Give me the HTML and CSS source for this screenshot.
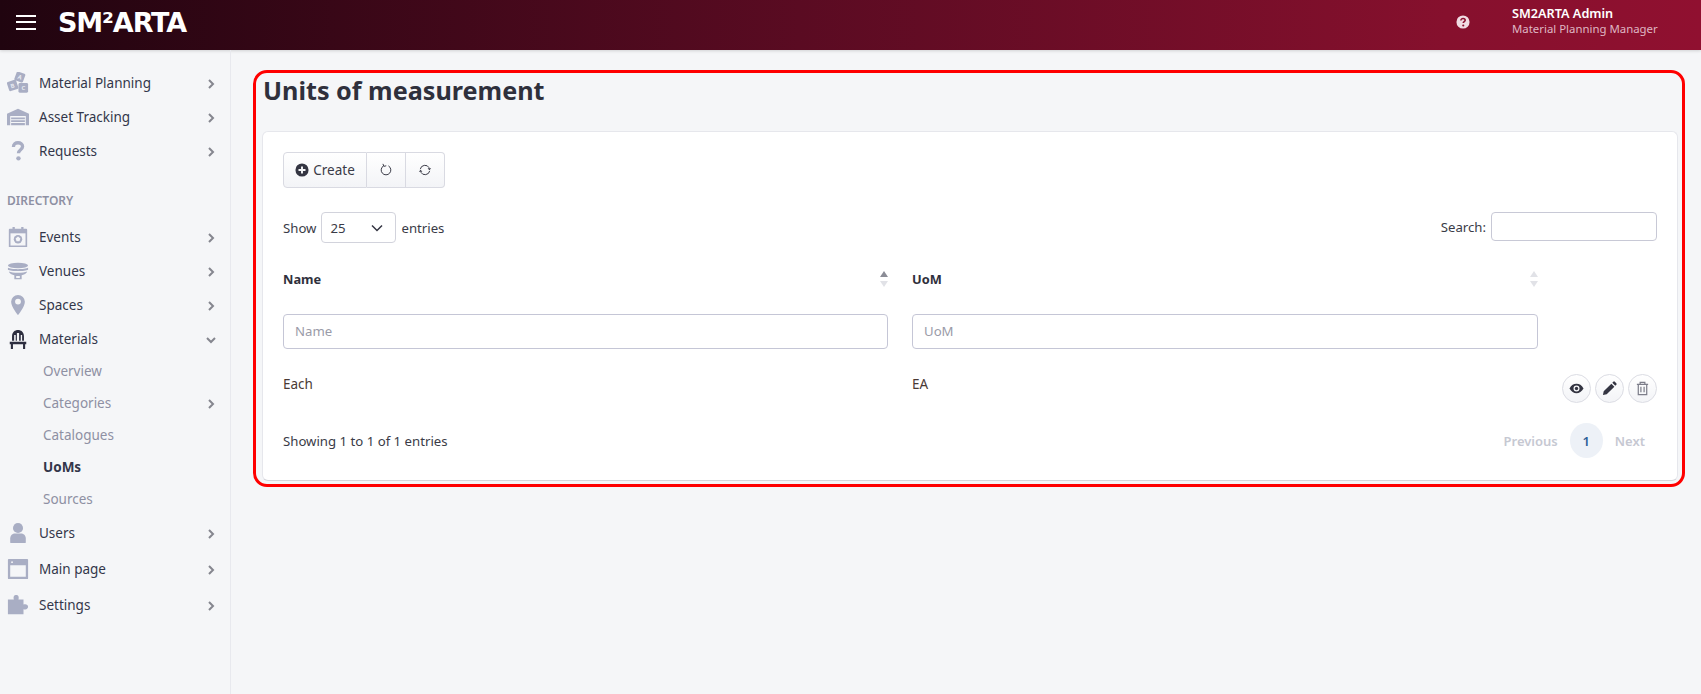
FILE: index.html
```html
<!DOCTYPE html>
<html lang="en">
<head>
    <meta charset="UTF-8">
    <meta name="viewport" content="width=device-width, initial-scale=1.0">
    <title>Units of measurement</title>
    <link rel="stylesheet" href="styles.css">
</head>
<body>
    <header class="topbar">
        <button class="burger" aria-label="Menu"><span></span><span></span><span></span></button>
        <div class="logo">SM²ARTA</div>
        <svg class="help-icon" viewBox="0 0 16 16"><circle cx="8" cy="8" r="7.500" fill="#f0dbe2"/><path d="M5.600 6.200c0-1.400 1.100-2.200 2.500-2.200s2.400.8 2.400 2c0 1.700-2.200 1.600-2.200 3.200" fill="none" stroke="#8a0f2e" stroke-width="1.800"/><circle cx="8.300" cy="12" r="1.200" fill="#8a0f2e"/></svg>
        <div class="user">
            <div class="user-name">SM2ARTA Admin</div>
            <div class="user-role">Material Planning Manager</div>
        </div>
    </header>

    <div class="layout">
        <nav class="sidebar">
            <ul class="nav nav-top">
                <li class="nav-item">
                    <svg class="nav-icon" viewBox="0 0 24 24"><g fill="#a9aec4"><rect x="9" y="0.500" width="10" height="10" rx="1.500" transform="rotate(20 14 5.500)"/><rect x="1" y="9.500" width="10.500" height="10.500" rx="1.500" transform="rotate(-18 6 15)"/><rect x="12.500" y="12" width="10.500" height="10.500" rx="1.500"/></g><g class="block-letter"><text x="14" y="8" transform="rotate(20 14 5.500)">A</text><text x="6" y="17.500" transform="rotate(-18 6 15)">B</text><text x="17.800" y="19.800">C</text></g></svg>
                    <span class="nav-label">Material Planning</span>
                    <svg class="chev" viewBox="0 0 8 12"><path d="M2 2l4 4-4 4" /></svg>
                </li>
                <li class="nav-item">
                    <svg class="nav-icon" viewBox="0 0 24 20"><path d="M0 6.500L12 1l12 5.500V19H20.500V9h-17v10H0z" fill="#a9aec4"/><path d="M4.500 10.500h15v2h-15zM4.500 13.500h15v2h-15zM4.500 16.500h15v2.500h-15z" fill="#a9aec4"/></svg>
                    <span class="nav-label">Asset Tracking</span>
                    <svg class="chev" viewBox="0 0 8 12"><path d="M2 2l4 4-4 4" /></svg>
                </li>
                <li class="nav-item">
                    <svg class="nav-icon" viewBox="0 0 24 24"><path d="M7 7.500C7 4.500 9.200 3 12 3s5 1.600 5 4.200c0 3.600-4.500 3.300-4.500 7.300" fill="none" stroke="#a9aec4" stroke-width="3.600"/><circle cx="12.500" cy="20" r="2.400" fill="#a9aec4"/></svg>
                    <span class="nav-label">Requests</span>
                    <svg class="chev" viewBox="0 0 8 12"><path d="M2 2l4 4-4 4" /></svg>
                </li>
            </ul>

            <div class="nav-heading">DIRECTORY</div>

            <ul class="nav">
                <li class="nav-item">
                    <svg class="nav-icon" viewBox="0 0 24 24"><path d="M3 3h3V1h2.500v2h7V1H18v2h3a1 1 0 011 1v19H2V4a1 1 0 011-1z" fill="#a9aec4"/><rect x="3.800" y="8" width="16.400" height="13.300" fill="#f5f6f8"/><circle cx="12" cy="14.500" r="4.600" fill="#a9aec4"/><path d="M12 11.500l2.600 2-1 3h-3.200l-1-3z" fill="#f5f6f8"/></svg>
                    <span class="nav-label">Events</span>
                    <svg class="chev" viewBox="0 0 8 12"><path d="M2 2l4 4-4 4" /></svg>
                </li>
                <li class="nav-item">
                    <svg class="nav-icon" viewBox="0 0 24 20"><ellipse cx="12" cy="4" rx="11" ry="3" fill="#a9aec4"/><path d="M1 6.500c3 2 19 2 22 0v2c-3 2-19 2-22 0z" fill="#a9aec4"/><path d="M2 10.500c4 2 16 2 20 0-1 3-5 4.500-10 4.500S3 13.500 2 10.500z" fill="#a9aec4"/><path d="M8 14h8v5H8zm2 1.500v2h4v-2z" fill="#a9aec4" fill-rule="evenodd"/></svg>
                    <span class="nav-label">Venues</span>
                    <svg class="chev" viewBox="0 0 8 12"><path d="M2 2l4 4-4 4" /></svg>
                </li>
                <li class="nav-item">
                    <svg class="nav-icon" viewBox="0 0 24 24"><path d="M12 1a7.500 7.500 0 00-7.500 7.500C4.500 14 12 23 12 23s7.500-9 7.500-14.500A7.500 7.500 0 0012 1zm0 10.500a3.200 3.200 0 110-6.400 3.200 3.200 0 010 6.400z" fill="#a9aec4" fill-rule="evenodd"/></svg>
                    <span class="nav-label">Spaces</span>
                    <svg class="chev" viewBox="0 0 8 12"><path d="M2 2l4 4-4 4" /></svg>
                </li>
                <li class="nav-item nav-item-open">
                    <svg class="nav-icon" viewBox="0 0 24 24"><path d="M5.500 14V9c0-9 13-9 13 0v5h-2V7.500h-1.500V14h-1.800V5.500h-2.400V14H9.500V7.500H7.800V14z" fill="#2d2e3f"/><path d="M3 15h18v2.800h-1.200V23h-2.300v-5.200h-11V23H4.200v-5.200H3z" fill="#2d2e3f"/></svg>
                    <span class="nav-label">Materials</span>
                    <svg class="chev chev-open" viewBox="0 0 12 8"><path d="M2 2l4 4 4-4" /></svg>
                </li>
                <li class="sub-item">Overview</li>
                <li class="sub-item">Categories
                    <svg class="chev" viewBox="0 0 8 12"><path d="M2 2l4 4-4 4" /></svg>
                </li>
                <li class="sub-item">Catalogues</li>
                <li class="sub-item active">UoMs</li>
                <li class="sub-item">Sources</li>
                <li class="nav-item nav-item-tall">
                    <svg class="nav-icon" viewBox="0 0 24 24"><circle cx="12" cy="6.500" r="5.500" fill="#a9aec4"/><path d="M3.500 22v-4c0-3.500 2.500-5.500 5.500-5.500h6c3 0 5.500 2 5.500 5.500v4a1 1 0 01-1 1h-15a1 1 0 01-1-1z" fill="#a9aec4"/></svg>
                    <span class="nav-label">Users</span>
                    <svg class="chev" viewBox="0 0 8 12"><path d="M2 2l4 4-4 4" /></svg>
                </li>
                <li class="nav-item nav-item-tall">
                    <svg class="nav-icon" viewBox="0 0 24 24"><path d="M2 1h20a1 1 0 011 1v20a1 1 0 01-1 1H2a1 1 0 01-1-1V2a1 1 0 011-1zm1.500 7v12.500h17V8z" fill="#a9aec4" fill-rule="evenodd"/><circle cx="5.500" cy="4.500" r="1" fill="#f5f6f8"/></svg>
                    <span class="nav-label">Main page</span>
                    <svg class="chev" viewBox="0 0 8 12"><path d="M2 2l4 4-4 4" /></svg>
                </li>
                <li class="nav-item nav-item-tall">
                    <svg class="nav-icon" viewBox="0 0 24 24"><path d="M1 6h6.500C6.500 2.500 8 1 10 1s3.500 1.500 2.500 5H18v5.500c3-1 5 .5 5 2.500s-2 3.500-5 2.500V22H1z" fill="#a9aec4"/></svg>
                    <span class="nav-label">Settings</span>
                    <svg class="chev" viewBox="0 0 8 12"><path d="M2 2l4 4-4 4" /></svg>
                </li>
            </ul>
        </nav>

        <main class="content">
            <section class="highlight">
                <h1 class="page-title">Units of measurement</h1>

                <div class="card">
                    <div class="btn-group">
                        <button class="btn btn-create">
                            <svg class="btn-icon" viewBox="0 0 16 16"><circle cx="8" cy="8" r="7.500" fill="#343542"/><path d="M8 4v8M4 8h8" stroke="#f5f6f8" stroke-width="2.200"/></svg>
                            Create
                        </button>
                        <button class="btn btn-small" aria-label="Reset">
                            <svg class="btn-icon" viewBox="0 0 16 16"><path d="M5.200 3.300a5.500 5.500 0 105.600 0" fill="none" stroke="#343542" stroke-width="1.100"/><path d="M4.500 1l1 2.800 2.800-.6" fill="none" stroke="#343542" stroke-width="1.100"/></svg>
                        </button>
                        <button class="btn btn-small" aria-label="Refresh">
                            <svg class="btn-icon" viewBox="0 0 16 16"><path d="M2.600 7a5.500 5.500 0 0110.200-1.500M13.400 9a5.500 5.500 0 01-10.200 1.500" fill="none" stroke="#343542" stroke-width="1.100"/><path d="M11 6h4l-2 2.200zM5 10H1l2-2.200z" fill="#343542"/></svg>
                        </button>
                    </div>

                    <div class="table-top">
                        <label class="length">Show
                            <span class="select">25
                                <svg class="select-arrow" viewBox="0 0 12 8"><path d="M1 1.500l5 5 5-5" /></svg>
                            </span>
                            entries</label>
                        <label class="search">Search: <input class="search-input" type="text"></label>
                    </div>

                    <table class="table">
                        <thead>
                            <tr class="head-row">
                                <th class="col-name">
                                    <div class="th-inner">Name<span class="sort sort-asc"></span></div>
                                </th>
                                <th class="col-uom">
                                    <div class="th-inner">UoM<span class="sort"></span></div>
                                </th>
                                <th class="col-actions"></th>
                            </tr>
                            <tr class="filter-row">
                                <td><input class="filter-input" type="text" placeholder="Name"></td>
                                <td><input class="filter-input" type="text" placeholder="UoM"></td>
                                <td></td>
                            </tr>
                        </thead>
                        <tbody>
                            <tr class="data-row">
                                <td>Each</td>
                                <td>EA</td>
                                <td>
                                    <div class="actions">
                                        <button class="round-btn" aria-label="View"><svg viewBox="0 0 16 16"><path d="M.5 8C2.500 4.500 5 3 8 3s5.500 1.500 7.500 5c-2 3.500-4.500 5-7.500 5S2.500 11.500.500 8zM8 4.800a3.200 3.200 0 100 6.400 3.200 3.200 0 000-6.400z" fill="#343542" fill-rule="evenodd"/><circle cx="8" cy="8" r="1.800" fill="#343542"/></svg></button>
                                        <button class="round-btn" aria-label="Edit"><svg viewBox="0 0 16 16"><path d="M1 15l.8-4L10 2.800 13.200 6 5 14.200zM11 1.800l1-1a1.200 1.200 0 011.700 0l1.500 1.500a1.200 1.200 0 010 1.700l-1 1z" fill="#343542"/></svg></button>
                                        <button class="round-btn round-btn-muted" aria-label="Delete"><svg viewBox="0 0 16 16"><path d="M2 3.500h12M5.500 3.500V1.500h5v2M3.500 3.500v11h9v-11M6.300 6v6M9.700 6v6" fill="none" stroke="#7d7e8a" stroke-width="1.300"/></svg></button>
                                    </div>
                                </td>
                            </tr>
                        </tbody>
                    </table>

                    <div class="table-bottom">
                        <div class="info">Showing 1 to 1 of 1 entries</div>
                        <div class="pagination">
                            <span class="page-link">Previous</span>
                            <span class="page-current">1</span>
                            <span class="page-link">Next</span>
                        </div>
                    </div>
                </div>
            </section>
        </main>
    </div>
</body>
</html>
```

FILE: styles.css
```css
* {
    box-sizing: border-box;
}

body {
    margin: 0;
    font-family: "Noto Sans", sans-serif;
    font-size: 13.5px;
    color: #3a3b47;
    background: #f5f6f8;
}

ul {
    list-style: none;
    margin: 0;
    padding: 0;
}

button {
    font-family: inherit;
}

/* top bar */
.topbar {
    height: 50px;
    display: flex;
    align-items: center;
    padding: 0 38px 6px 16px;
    background: linear-gradient(90deg, #20040f 0%, #5a0b22 47%, #86102d 85%, #901030 100%);
    box-shadow: 0 1px 3px rgba(0, 0, 0, 0.15);
}

.burger {
    width: 20px;
    height: 15px;
    padding: 0;
    border: none;
    background: none;
    display: flex;
    flex-direction: column;
    justify-content: space-between;
}

.burger span {
    height: 2px;
    background: white;
}

.logo {
    margin-left: 22px;
    font-family: "DejaVu Sans", sans-serif;
    font-weight: bold;
    font-size: 27px;
    letter-spacing: -1.1px;
    line-height: 1;
    color: white;
}

.help-icon {
    width: 14px;
    height: 14px;
    margin-left: auto;
    margin-right: 42px;
}

.user {
    width: 151px;
    margin-bottom: 4px;
}

.user-name {
    font-size: 12.7px;
    font-weight: 600;
    line-height: 16px;
    color: white;
}

.user-role {
    font-size: 11.4px;
    line-height: 15px;
    color: #dfb6c3;
    white-space: nowrap;
}

.layout {
    display: flex;
    min-height: 644px;
}

/* sidebar */
.sidebar {
    width: 231px;
    flex: none;
    padding-top: 16px;
    border-right: 1px solid #e8e9ee;
}

.nav-item {
    height: 34px;
    display: flex;
    align-items: center;
    padding-left: 7px;
    color: #33364a;
}

.nav-item-tall {
    height: 36px;
}

.nav-item-open {
    margin-bottom: -1px;
}

.nav-icon {
    width: 22px;
    height: 22px;
    flex: none;
    margin-right: 10px;
}

.block-letter {
    font-family: "Noto Sans", sans-serif;
    font-size: 6.500px;
    font-weight: 600;
    fill: #eef0f5;
    text-anchor: middle;
}

.nav-label {
    flex: 1;
}

.chev {
    width: 8px;
    height: 12px;
    flex: none;
    margin-top: 2px;
    margin-right: 15px;
    fill: none;
    stroke: #85868f;
    stroke-width: 2;
}

.chev-open {
    width: 12px;
    height: 8px;
    margin-right: 13px;
}

.nav-heading {
    margin: 25px 0 11px 7px;
    font-size: 12px;
    font-weight: 600;
    line-height: 16px;
    color: #8e90a3;
}

.sub-item {
    height: 32px;
    display: flex;
    align-items: center;
    justify-content: space-between;
    padding-left: 43px;
    color: #8e90a3;
}

.sub-item.active {
    font-weight: 700;
    color: #33364a;
}

/* main */
.content {
    flex: 1;
    padding: 20px 16px 0 22px;
}

.highlight {
    border: 3px solid red;
    border-radius: 14px;
    padding: 0 4px 3px 6px;
}

.page-title {
    margin: 0;
    padding-left: 1px;
    height: 58px;
    font-size: 25.2px;
    font-weight: 700;
    line-height: 34px;
    color: #2f303c;
}

.card {
    padding: 20px 20px 22px;
    background: white;
    border: 1px solid #e6e7ec;
    border-bottom-color: #d5d6db;
    border-radius: 6px;
}

.btn-group {
    display: inline-flex;
    height: 36px;
    vertical-align: top;
}

.btn {
    display: flex;
    align-items: center;
    justify-content: center;
    gap: 4px;
    height: 36px;
    padding: 0;
    font-size: 13.5px;
    color: #3a3b47;
    background: linear-gradient(180deg, white, #f3f4f7);
    border: 1px solid #d9dae2;
    border-left: none;
}

.btn-create {
    width: 84px;
    border-left: 1px solid #d9dae2;
    border-radius: 4px 0 0 4px;
}

.btn-small {
    width: 39px;
}

.btn-small:last-child {
    border-radius: 0 4px 4px 0;
}

.btn-icon {
    width: 14px;
    height: 14px;
}

.table-top {
    display: flex;
    justify-content: space-between;
    margin-top: 24px;
    font-size: 13.2px;
}

.length {
    display: flex;
    align-items: center;
    gap: 5px;
}

.select {
    width: 75px;
    height: 31px;
    padding: 0 12px 0 8px;
    display: flex;
    align-items: center;
    justify-content: space-between;
    background: white;
    border: 1px solid #d2d3dc;
    border-radius: 4px;
}

.select-arrow {
    width: 12px;
    height: 8px;
    fill: none;
    stroke: #343542;
    stroke-width: 1.500;
}

.search {
    display: flex;
    align-items: center;
    gap: 5px;
    height: 29px;
}

.search-input {
    width: 166px;
    height: 29px;
    border: 1px solid #c8c9d6;
    border-radius: 4px;
    background: white;
}

.table {
    width: 100%;
    margin-top: 12px;
    border-collapse: collapse;
    table-layout: fixed;
}

.table th,
.table td {
    padding: 0;
    text-align: left;
}

.col-name {
    width: 629px;
}

.col-uom {
    width: 650px;
}

.col-actions {
    width: 95px;
}

.head-row {
    height: 48px;
}

.th-inner {
    display: flex;
    justify-content: space-between;
    align-items: center;
    padding-right: 24px;
    font-size: 12.8px;
    font-weight: 700;
    color: #2f303c;
}

/* sort arrows, two css triangles */
.sort {
    position: relative;
    width: 8px;
    height: 16px;
    margin-right: 0;
}

.sort::before,
.sort::after {
    content: "";
    position: absolute;
    left: 0;
    border-left: 4px solid transparent;
    border-right: 4px solid transparent;
}

.sort::before {
    top: 0;
    border-bottom: 6px solid #e1e2e7;
}

.sort::after {
    bottom: 0;
    border-top: 6px solid #e1e2e7;
}

.sort-asc::before {
    border-bottom-color: #8b8c96;
}

.filter-row {
    height: 59px;
}

.filter-row td {
    padding-bottom: 2px;
}

.filter-input {
    display: block;
    width: 605px;
    height: 35px;
    padding: 0 11px 2px;
    font-family: inherit;
    font-size: 13.2px;
    border: 1px solid #c5c6d6;
    border-radius: 4px;
    background: white;
}

.filter-row td:nth-child(2) .filter-input {
    width: 626px;
}

.filter-input::placeholder {
    color: #9a9ba8;
}

.data-row {
    height: 53px;
}

.data-row td {
    vertical-align: top;
    padding-top: 12px;
    line-height: 20px;
    color: #4a3a35;
}

.actions {
    display: flex;
    justify-content: flex-end;
    gap: 4px;
}

.round-btn {
    width: 29px;
    height: 29px;
    padding: 0;
    display: flex;
    align-items: center;
    justify-content: center;
    background: linear-gradient(180deg, white, #f3f4f7);
    border: 1px solid #dcdde4;
    border-radius: 50%;
}

.round-btn svg {
    width: 15px;
    height: 15px;
}

.table-bottom {
    display: flex;
    justify-content: space-between;
    align-items: center;
    margin-top: 8px;
    padding-right: 12px;
    font-size: 13.2px;
}

.pagination {
    display: flex;
    align-items: center;
    gap: 12px;
    font-size: 13px;
    font-weight: 600;
    color: #c6c8d2;
}

.page-current {
    width: 33px;
    height: 35px;
    display: flex;
    align-items: center;
    justify-content: center;
    color: #2f5f98;
    background: #edf1f7;
    border-radius: 50%;
}
```
